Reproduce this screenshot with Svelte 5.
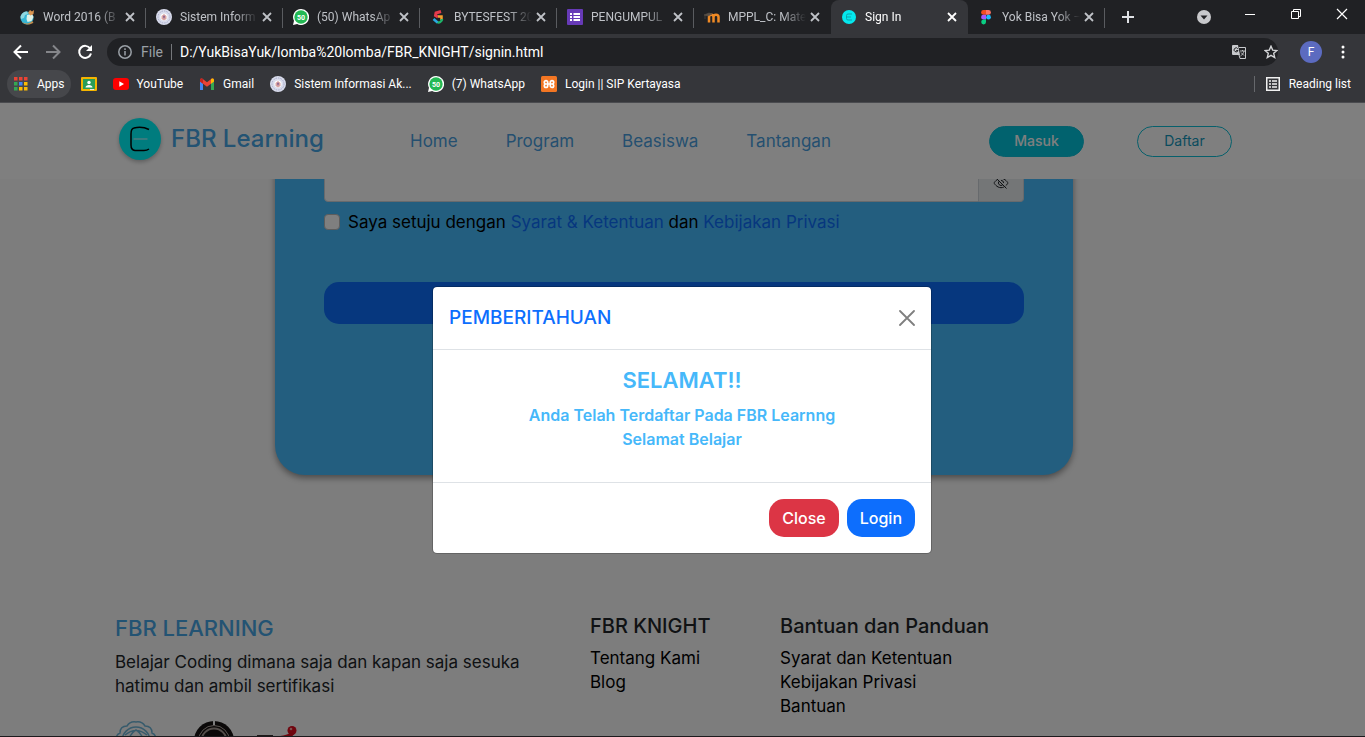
<script>
  const tabs = [
    { title: 'Word 2016 (B', icon: 'globe' },
    { title: 'Sistem Inform', icon: 'campus' },
    { title: '(50) WhatsAp', icon: 'whatsapp' },
    { title: 'BYTESFEST 20', icon: 'bytes' },
    { title: 'PENGUMPUL', icon: 'forms' },
    { title: 'MPPL_C: Mate', icon: 'moodle' },
    { title: 'Sign In', icon: 'site', active: true },
    { title: 'Yok Bisa Yok –', icon: 'figma' },
  ];
  const bookmarks = [
    { label: '', icon: 'classroom', name: 'Classroom' },
    { label: 'YouTube', icon: 'youtube' },
    { label: 'Gmail', icon: 'gmail' },
    { label: 'Sistem Informasi Ak...', icon: 'campus' },
    { label: '(7) WhatsApp', icon: 'whatsapp' },
    { label: 'Login || SIP Kertayasa', icon: 'xampp' },
  ];
  const appColors = ['#ea4335', '#ea4335', '#ea4335', '#34a853', '#4285f4', '#fbbc04', '#34a853', '#fbbc04', '#fbbc04'];
  const links = ['Home', 'Program', 'Beasiswa', 'Tantangan'];
  const help = ['Syarat dan Ketentuan', 'Kebijakan Privasi', 'Bantuan'];
  let agreed = $state(false);
</script>

{#snippet icon(name)}
  <svg class="ico" viewBox="0 0 16 16" aria-hidden="true">
    {#if name === 'globe'}
      <circle cx="8" cy="9" r="6.500" fill="#35b5d4" />
      <path d="M1.500 8C2 4.500 5 2.500 8 2.500L9 5 6 6 5 9 2 10Z" fill="#8fd8e0" />
      <path d="M8 6l5-1 1.500 3-2 4-4 1-1-3z" fill="#dff1e6" />
      <path d="M9 4l2-3 2 1.500L15 1l-.500 4-3 1.500z" fill="#d99450" />
      <path d="M3 13c3 2 8 2 10-1l1.500 1.500C11 16.500 5 16 3 13z" fill="#c08a4c" />
    {:else if name === 'campus'}
      <circle cx="8" cy="8" r="8" fill="#d9dcec" />
      <circle cx="8" cy="8" r="6" fill="none" stroke="#a7abc9" stroke-dasharray="1.500 1" />
      <circle cx="8" cy="8" r="3.600" fill="#fff" />
      <path d="M8 5l2.500 2v3L8 11.500 5.500 10V7z" fill="#d9a4a2" />
      <path d="M8 6.200l1 1.500-1 2-1-2z" fill="#815b8d" />
    {:else if name === 'whatsapp'}
      <path d="M8 0a8 8 0 1 1-3.800 15L0 16l1-4.200A8 8 0 0 1 8 0z" fill="#fff" />
      <circle cx="8" cy="8" r="6.700" fill="#24b954" />
      <text x="8" y="10.500" text-anchor="middle" font-size="7" font-weight="700" fill="#fff">50</text>
    {:else if name === 'bytes'}
      <path d="M11 2.500L6 4 5.500 6.500 8 8" fill="none" stroke="#e43b4b" stroke-width="3" />
      <path d="M8 7.500h3.500v3.500" fill="none" stroke="#f5a02c" stroke-width="2.500" />
      <path d="M12 10c0 3-3 4-5 3" fill="none" stroke="#1fb46a" stroke-width="2.500" />
      <path d="M3.500 10l4 3.500" fill="none" stroke="#28a9e0" stroke-width="2.500" />
    {:else if name === 'forms'}
      <rect width="16" height="16" rx="1" fill="#673ab7" />
      <path d="M3 4h2v2H3zm3.500 0H13v2H6.500zM3 7h2v2H3zm3.500 0H13v2H6.500zM3 10h2v2H3zm3.500 0H13v2H6.500z" fill="#fff" />
    {:else if name === 'moodle'}
      <path d="M5 13.500V8c0-3 4.500-3 4.500 0v5.500M9.500 8c0-3 5-3 5 0v5.500" fill="none" stroke="#f08a24" stroke-width="2.500" />
      <path d="M0 6l5-2 3 1-4 2zM1 6v4" fill="#5a5048" stroke="#5a5048" stroke-width=".6" />
    {:else if name === 'site'}
      <circle cx="8" cy="8" r="7" fill="#05e8ee" />
      <path d="M11 5H7q-1.500 0-1.500 1.500v3q0 1.500 1.500 1.500h4M6 8h4" fill="none" stroke="#0aa5ad" />
    {:else if name === 'figma'}
      <path d="M8 1H5.500a2.400 2.400 0 0 0 0 4.800H8z" fill="#f24e1e" />
      <path d="M8 1h2.500a2.400 2.400 0 0 1 0 4.800H8z" fill="#ff7262" />
      <path d="M8 5.800H5.500a2.400 2.400 0 0 0 0 4.800H8z" fill="#a259ff" />
      <circle cx="10.500" cy="8.200" r="2.400" fill="#1abcfe" />
      <path d="M8 10.600H5.500A2.400 2.400 0 1 0 8 13z" fill="#0acf83" />
    {:else if name === 'classroom'}
      <rect y="1" width="16" height="14" rx="1" fill="#f4b400" />
      <rect x="2" y="3" width="12" height="10" fill="#2a9d58" />
      <circle cx="8" cy="6.500" r="1.700" fill="#fff" />
      <path d="M4.500 11.500c0-3.500 7-3.500 7 0z" fill="#fff" />
      <path d="M9 13h4v1H9z" fill="#e8e8e8" />
    {:else if name === 'youtube'}
      <rect y="2" width="16" height="12" rx="3" fill="#f00" />
      <path d="M6.300 5.200v5.600L11 8z" fill="#fff" />
    {:else if name === 'gmail'}
      <path d="M1 3.500V14h3V7z" fill="#4285f4" />
      <path d="M15 3.500V14h-3V7z" fill="#34a853" />
      <path d="M1 4c0-1.500 1.500-2 2.500-1.200L8 6.300l4.500-3.500C13.500 2 15 2.500 15 4v1.500l-7 5.200-7-5.200z" fill="#ea4335" />
      <path d="M15 4v1.500l-3 2.200V3.200l.500-.400C13.500 2 15 2.500 15 4z" fill="#fbbc04" />
      <path d="M1 4v1.500l3 2.200V3.200l-.500-.400C2.500 2 1 2.500 1 4z" fill="#c5221f" />
    {:else if name === 'xampp'}
      <rect width="16" height="16" rx="1.500" fill="#f37623" />
      <path d="M6.500 8H5a1.700 1.700 0 1 1 1.700-1.700v3.400A1.700 1.700 0 1 1 5 8h6a1.700 1.700 0 1 0-1.700-1.700v3.400A1.700 1.700 0 1 0 11 8" fill="none" stroke="#fff" stroke-width="1.700" />
    {/if}
  </svg>
{/snippet}

{#snippet cross()}
  <svg class="cross" viewBox="0 0 10 10" aria-hidden="true"><path d="M1 1l8 8M9 1L1 9" /></svg>
{/snippet}

<div class="window">
  <header class="browser">
    <div class="tabstrip">
      {#each tabs as tab}
        <div class="tab" class:active={tab.active}>
          {@render icon(tab.icon)}
          <span class="tab-title">{tab.title}</span>
          <button class="plain" aria-label="Close tab">{@render cross()}</button>
        </div>
      {/each}
      <button class="plain new-tab" aria-label="New tab">
        <svg width="12" height="12" viewBox="0 0 12 12"><path d="M6 0v12M0 6h12" stroke="#dfe1e5" stroke-width="2" /></svg>
      </button>
      <div class="window-buttons">
        <button class="plain" aria-label="Search tabs">
          <svg width="14" height="14" viewBox="0 0 14 14"><circle cx="7" cy="7" r="7" fill="#c8c9cc" /><path d="M3.500 5.500h7L7 9.500z" fill="#202124" /></svg>
        </button>
        <button class="plain raised" aria-label="Minimize">
          <svg width="12" height="12" viewBox="0 0 12 12"><path d="M1 6.500h10" stroke="#fff" /></svg>
        </button>
        <button class="plain raised" aria-label="Restore">
          <svg width="12" height="12" viewBox="0 0 12 12" fill="none" stroke="#fff"><path d="M1.500 3.500h7v7h-7zM3.500 3.500v-2h7v7h-2" /></svg>
        </button>
        <button class="plain raised" aria-label="Close window">
          <svg width="12" height="12" viewBox="0 0 12 12"><path d="M1 1l10 10M11 1L1 11" stroke="#fff" stroke-width="1.200" /></svg>
        </button>
      </div>
    </div>

    <div class="toolbar">
      <button class="plain" aria-label="Back">
        <svg width="16" height="16" viewBox="0 0 16 16" fill="none" stroke="#fff" stroke-width="2"><path d="M15 8H2M8 1.500L1.500 8 8 14.500" /></svg>
      </button>
      <button class="plain" aria-label="Forward">
        <svg width="16" height="16" viewBox="0 0 16 16" fill="none" stroke="#85868a" stroke-width="2"><path d="M1 8h13M8 1.500L14.500 8 8 14.500" /></svg>
      </button>
      <button class="plain" aria-label="Reload">
        <svg width="16" height="16" viewBox="0 0 16 16"><path d="M13.200 4.500A6 6 0 1 0 14 9.500" fill="none" stroke="#fff" stroke-width="2" /><path d="M15 1v6H9z" fill="#fff" /></svg>
      </button>
      <div class="omnibox">
        <svg width="14" height="14" viewBox="0 0 14 14"><circle cx="7" cy="7" r="6.200" fill="none" stroke="#9aa0a6" stroke-width="1.500" /><path d="M7 6v4.500M7 3.300V5" stroke="#9aa0a6" stroke-width="1.500" /></svg>
        <span class="scheme">File</span>
        <input class="address" aria-label="Address" value="D:/YukBisaYuk/lomba%20lomba/FBR_KNIGHT/signin.html" />
        <button class="plain" aria-label="Translate">
          <svg width="14" height="14" viewBox="0 0 14 14"><path d="M0 1q0-1 1-1h5l2 10H1q-1 0-1-1z" fill="#c7c9cc" /><path d="M7 2.500h6.500v11H8L7 10" fill="none" stroke="#c7c9cc" /><path d="M5.800 3.800A2 2 0 1 0 6 5.500H4.200" fill="none" stroke="#202124" /><path d="M8 6h5M10.500 5v1M12 6c-.500 2.500-2 4-3.500 5M9 7.500l3 3" fill="none" stroke="#c7c9cc" stroke-width=".9" /></svg>
        </button>
        <button class="plain" aria-label="Bookmark this page">
          <svg width="14" height="14" viewBox="0 0 14 14"><path d="M7 1.200l1.700 3.900 4.200.400-3.200 2.800 1 4.200L7 10.300l-3.700 2.200 1-4.200L1.100 5.500l4.200-.400z" fill="none" stroke="#d5d6d8" stroke-width="1.400" /></svg>
        </button>
      </div>
      <button class="avatar" aria-label="Profile">F</button>
      <button class="plain" aria-label="Menu">
        <svg width="4" height="14" viewBox="0 0 4 14" fill="#fff"><circle cx="2" cy="2" r="1.500" /><circle cx="2" cy="7" r="1.500" /><circle cx="2" cy="12" r="1.500" /></svg>
      </button>
    </div>

    <nav class="bookmarks" aria-label="Bookmarks">
      <button class="apps">
        <svg width="14" height="14" viewBox="0 0 14 14" aria-hidden="true">
          {#each appColors as color, i}
            <rect x={(i % 3) * 5} y={Math.floor(i / 3) * 5} width="3.500" height="3.500" fill={color} />
          {/each}
        </svg>
        Apps
      </button>
      {#each bookmarks as mark}
        <a class="bookmark" href="#top" aria-label={mark.label || mark.name}>
          {@render icon(mark.icon)}{#if mark.label}<span>{mark.label}</span>{/if}
        </a>
      {/each}
      <button class="reading">
        <svg width="14" height="14" viewBox="0 0 14 14" aria-hidden="true"><path d="M.750.750h12.500v12.500H.750z" fill="none" stroke="#f1f1f1" stroke-width="1.500" /><path d="M3 4h2M6 4h5M3 7h2M6 7h5M3 10h2M6 10h5" stroke="#f1f1f1" stroke-width="1.500" /></svg>
        Reading list
      </button>
    </nav>
  </header>

  <div class="viewport" id="top">
    <nav class="navbar" aria-label="Main">
      <a class="brand" href="#top">
        <svg width="48" height="48" viewBox="0 0 48 48" aria-hidden="true">
          <circle cx="24" cy="24" r="21" fill="#00f8fc" />
          <path d="M33 14.500Q26 11 18 13Q15 13.500 15 19v11q0 5 4 5.500h9q3 0 5-1.500" fill="none" stroke="#000" stroke-width="1.500" />
          <path d="M17.500 24h14" stroke="#a4f6ff" stroke-width="1.400" />
        </svg>
        FBR Learning
      </a>
      <div class="links">
        {#each links as link}<a href="#top">{link}</a>{/each}
      </div>
      <div class="account">
        <button class="pill filled">Masuk</button>
        <button class="pill">Daftar</button>
      </div>
    </nav>

    <div class="page">
      <form class="card">
        <div class="password">
          <input type="password" aria-label="Kata sandi" />
          <button type="button" aria-label="Tampilkan kata sandi">
            <svg width="16" height="16" viewBox="0 0 16 16" fill="none" stroke="#212529" stroke-width="1"><path d="M4.600 4.400C2.300 5.700 1 8 1 8s2.700 4.700 7 4.700c1.100 0 2-.300 2.900-.700M6.700 3.400Q7.300 3.300 8 3.300C12.300 3.300 15 8 15 8s-.800 1.500-2.300 2.800M6 6.300a2.600 2.600 0 0 0 3.700 3.600M8 5.400A2.600 2.600 0 0 1 10.600 8M2.500 2.500l11 11" /></svg>
          </button>
        </div>
        <div class="agree">
          <input type="checkbox" id="agree" bind:checked={agreed} />
          <label for="agree">Saya setuju dengan <a href="#top">Syarat &amp; Ketentuan</a> dan <a href="#top">Kebijakan Privasi</a></label>
        </div>
        <button type="button" class="submit" aria-label="Daftar"></button>
      </form>

      <footer class="footer">
        <section>
          <h4>FBR LEARNING</h4>
          <p>Belajar Coding dimana saja dan kapan saja sesuka hatimu dan ambil sertifikasi</p>
          <div class="partners">
            <svg width="42" height="42" viewBox="0 0 42 42" fill="none" stroke="#6fb6d8" stroke-width="1.500" aria-hidden="true">
              <path d="M2 21q-2-6 3-8 0-7 7-7 3-5 9-4 6-1 9 4 7 0 7 7 5 2 3 8 2 6-3 8 0 7-7 7-3 5-9 4-6 1-9-4-7 0-7-7-5-2-3-8z" />
              <circle cx="21" cy="21" r="14" /><path d="M14 22q0-8 7-12 7 4 7 12M10 15q11-9 22 0" />
            </svg>
            <svg width="42" height="42" viewBox="0 0 42 42" aria-hidden="true">
              <circle cx="21" cy="21" r="20" fill="#171312" /><circle cx="21" cy="21" r="15.500" fill="none" stroke="#b5aaa4" stroke-width="1" /><circle cx="21" cy="21" r="12.500" fill="none" stroke="#a69a94" stroke-width="2" /><path d="M21 0v5" stroke="#fafafa" stroke-width="2" />
            </svg>
            <svg width="42" height="42" viewBox="0 0 42 42" aria-hidden="true">
              <circle cx="21" cy="10.500" r="4.500" fill="#e00a1c" /><path d="M19 13q-3 2-10 3l10 3 5-6z" fill="#d80a1a" /><path d="M-14 15.500h16" stroke="#3a3030" /><circle cx="20" cy="9" r="1.300" fill="#ffa0a0" />
            </svg>
          </div>
        </section>
        <section>
          <h5>FBR KNIGHT</h5>
          <ul><li><a href="#top">Tentang Kami</a></li><li><a href="#top">Blog</a></li></ul>
        </section>
        <section>
          <h5>Bantuan dan Panduan</h5>
          <ul>{#each help as item}<li><a href="#top">{item}</a></li>{/each}</ul>
        </section>
      </footer>
    </div>

    <div class="backdrop">
      <div class="modal" role="dialog" aria-modal="true" aria-labelledby="modal-title">
        <div class="modal-header">
          <h5 id="modal-title">PEMBERITAHUAN</h5>
          <button class="plain" aria-label="Tutup">
            <svg width="16" height="16" viewBox="0 0 16 16"><path d="M1 1l14 14M15 1L1 15" stroke="#7f7f7f" stroke-width="1.800" stroke-linecap="round" /></svg>
          </button>
        </div>
        <div class="modal-body">
          <h4>SELAMAT!!</h4>
          <p>Anda Telah Terdaftar Pada FBR Learnng<br />Selamat Belajar</p>
        </div>
        <div class="modal-footer">
          <button class="action danger">Close</button>
          <button class="action">Login</button>
        </div>
      </div>
    </div>
  </div>
</div>

<style>
  :global(body) { margin: 0; }
  * { box-sizing: border-box; }
  a { color: inherit; text-decoration: none; }
  button { font: inherit; }
  h4, h5, p, ul { margin: 0; padding: 0; font-weight: inherit; }
  ul { list-style: none; }
  svg { display: block; flex: none; }
  .plain { display: flex; align-items: center; justify-content: center; padding: 0; border: 0; background: none; color: inherit; }
  .window { display: flex; flex-direction: column; height: 100vh; overflow: hidden; border-bottom: 1px solid #1c1a1d; }

  .browser { background: #35363a; color: #fff; font: 12px/16px Roboto, "Noto Sans", sans-serif; border-bottom: 1px solid #4a4b4f; }
  .ico { width: 16px; height: 16px; }
  .tabstrip { display: flex; height: 34px; padding-left: 9px; background: #202124; color: #bfc2c7; }
  .tab { display: flex; align-items: center; flex: 0 1 137px; min-width: 0; padding: 0 10px; border-right: 1px solid transparent; border-image: linear-gradient(transparent 24%, #5a5c60 24%, #5a5c60 80%, transparent 80%) 1; }
  .tab-title { flex: 1; min-width: 0; margin: 0 4px 0 8px; white-space: nowrap; mask-image: linear-gradient(90deg, #000 70%, transparent); }
  .tab.active { background: #35363a; color: #fff; border-radius: 8px 8px 0 0; border-image: none; }
  .tab:has(+ .active) { border-image: none; }
  .cross { width: 10px; height: 10px; fill: none; stroke: currentColor; stroke-width: 1.800; }
  .new-tab { width: 46px; }
  .window-buttons { display: flex; margin-left: auto; }
  .window-buttons .plain { width: 46px; }
  .window-buttons .raised { height: 28px; }
  .toolbar { display: flex; align-items: center; gap: 16px; height: 35px; padding: 0 20px 0 13px; }
  .omnibox { display: flex; align-items: center; flex: 1; height: 28px; margin-left: -2px; padding-left: 11px; border-radius: 14px; background: #202124; font-size: 14px; }
  .scheme { margin-left: 9px; padding-right: 8px; border-right: 1px solid #75777b; color: #9aa0a6; }
  .address { flex: 1; min-width: 0; padding: 0 8px; border: 0; background: none; color: #fff; font: inherit; outline: 0; }
  .omnibox .plain { width: 32px; }
  .omnibox .plain:last-child { margin-right: -9px; }
  .avatar { width: 22px; height: 22px; margin: 0 3px 0 6px; padding: 0; border: 0; border-radius: 50%; background: #5c6bc0; color: #fff; }
  .bookmarks { display: flex; align-items: center; height: 33px; padding: 0 14px 3px 7px; }
  .apps, .reading { display: flex; align-items: center; border: 0; background: none; color: inherit; }
  .apps { gap: 9px; height: 28px; margin-right: 2px; padding: 0 6px 0 7px; border-radius: 14px; background: #46474b; }
  .bookmark { display: flex; align-items: center; gap: 8px; padding: 0 8px; white-space: nowrap; }
  .reading { gap: 9px; margin-left: auto; padding: 0 0 0 11px; border-left: 1px solid #66686c; }

  .viewport { position: relative; display: flex; flex: 1; flex-direction: column; min-height: 0; overflow: hidden; background: #fafafa; color: #212529; font: 400 17px/24px Inter, sans-serif; }
  .navbar { display: flex; align-items: center; flex: none; height: 76px; padding: 0 133px 0 116px; background: #fff; z-index: 1; color: #4a9fe0; }
  .brand { display: flex; align-items: center; gap: 7px; width: 294px; margin-bottom: 4px; color: #46a6e6; font-size: 24px; font-weight: 500; }
  .brand svg { filter: drop-shadow(0 2px 2px #0004); }
  .links { display: flex; gap: 48px; }
  .account { display: flex; gap: 53px; margin-left: auto; }
  .pill { width: 95px; height: 31px; padding: 0; border: 1px solid #0dc0d8; border-radius: 16px; background: none; color: #1598bc; font-size: 14px; }
  .filled { background: #02c4dc; color: #fff; font-weight: 500; }

  .page { margin-top: -64px; }
  .card { width: 798px; max-width: 100%; margin: 0 auto; padding: 49px 49px 151px; border-radius: 30px; background: #46bcff; box-shadow: 0 3px 6px #0006; }
  .page { padding-right: 17px; }
  .password { display: flex; height: 38px; }
  .password input { flex: 1; min-width: 0; border: 1px solid #ced4da; border-radius: 4px 0 0 4px; background: #fff; }
  .password button { width: 45px; padding: 0; border: 1px solid #ced4da; border-left: 0; border-radius: 0 4px 4px 0; background: #e9ecef; display: grid; place-items: center; }
  .agree { display: flex; align-items: center; gap: 8px; margin-top: 8px; color: #000; }
  .agree input { width: 16px; height: 16px; margin: 0; appearance: none; border: 1px solid #bbb; border-radius: 4px; background: #fff; }
  .agree a { color: #0d6efd; }
  .submit { display: block; width: 100%; height: 42px; margin-top: 48px; border: 0; border-radius: 15px; background: #0d6efd; }

  .footer { display: grid; grid-template-columns: 475px 190px 1fr; padding: 139px 98px 0 115px; }
  .footer h4 { margin-bottom: 8px; color: #46a6e6; font-size: 22px; line-height: 28px; font-weight: 500; }
  .footer h5 { margin-bottom: 8px; color: #212529; font-size: 20px; font-weight: 500; }
  .footer p { max-width: 440px; }
  .footer li { color: #000; }
  .partners { display: flex; gap: 36px; margin-top: 22px; }
  .partners svg { overflow: visible; }

  .backdrop { position: absolute; inset: 0; z-index: 2; display: grid; place-items: center; padding-right: 1px; background: #00000080; }
  .modal { width: 500px; max-width: 100%; border: 1px solid #0003; border-radius: 5px; background: #fff; background-clip: padding-box; }
  .modal-header { display: flex; align-items: center; justify-content: space-between; padding: 16px; border-bottom: 1px solid #dee2e6; }
  .modal-header h5 { color: #0d6efd; font-size: 19px; line-height: 30px; font-weight: 500; }
  .modal-body { padding: 16px 16px 31px; color: #46b8fa; text-align: center; font-weight: 600; font-size: 16px; }
  .modal-body h4 { margin-bottom: 8px; font-size: 22px; line-height: 29px; }
  .modal-footer { display: flex; justify-content: flex-end; gap: 8px; padding: 16px; border-top: 1px solid #dee2e6; }
  .action { height: 38px; padding: 0 12px; border: 1px solid transparent; border-radius: 15px; background: #0d6efd; background-clip: border-box; color: #fff; font-size: 16px; font-weight: 500; }
  .danger { background: #dc3545; }
</style>
